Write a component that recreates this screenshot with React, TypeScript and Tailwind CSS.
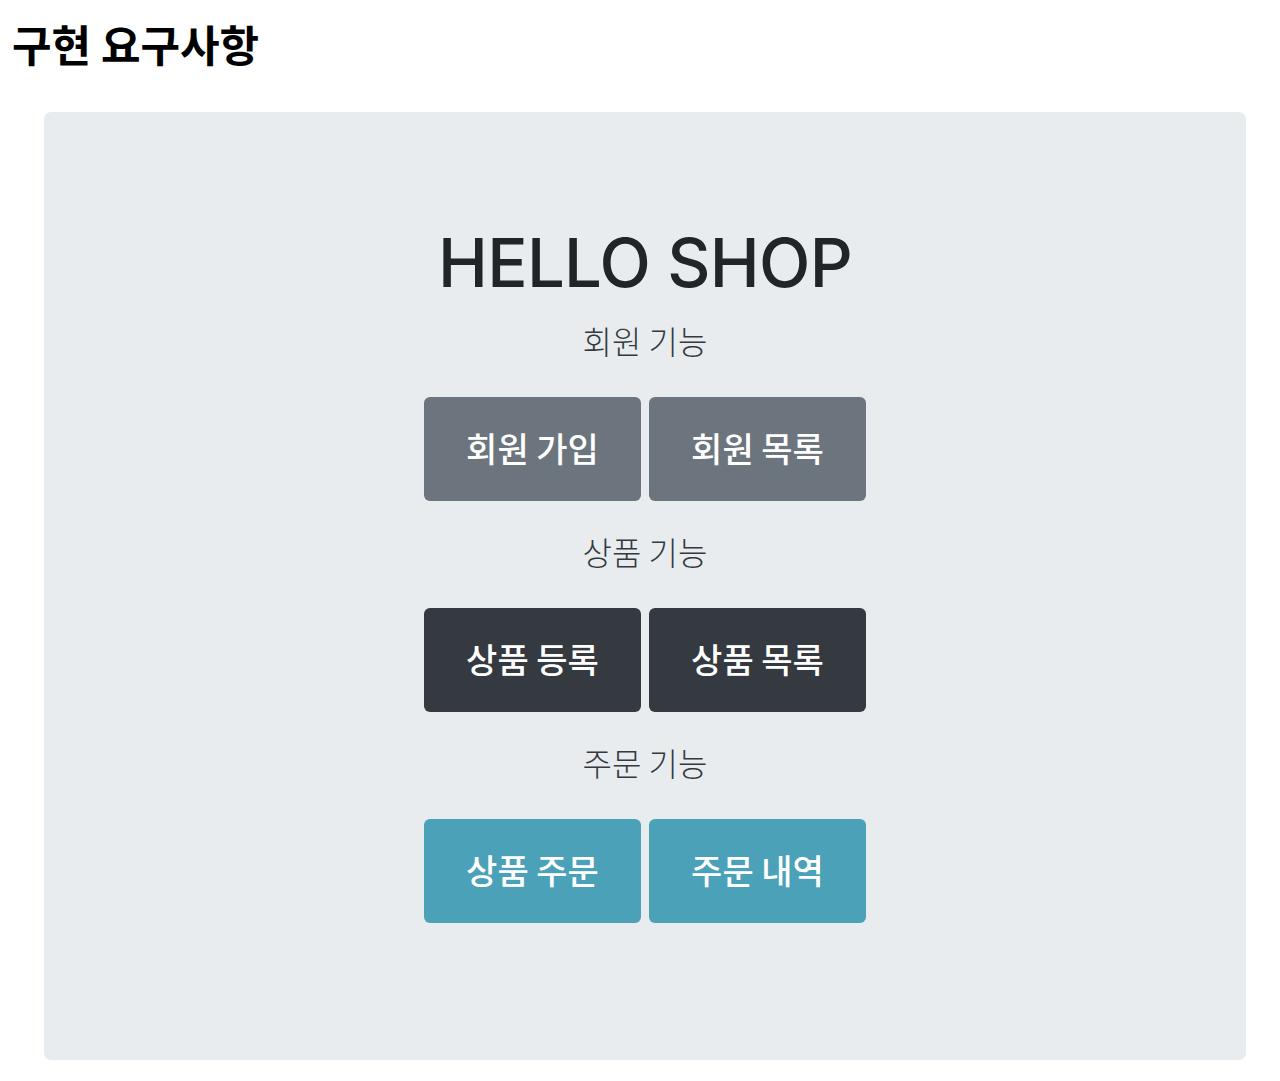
import React from "react";

const kr = { fontFamily: '"Noto Sans CJK KR", "Noto Sans", sans-serif' };

function Btn({ label, cls }: { label: string; cls: string }) {
  return (
    <button
      className={`w-[217px] h-[104px] rounded-[6px] text-white text-[34px] font-medium flex items-center justify-center pb-[3px] ${cls}`}
      style={kr}
    >
      {label}
    </button>
  );
}

function Section({ title, a, b, cls }: { title: string; a: string; b: string; cls: string }) {
  return (
    <div className="flex flex-col items-center">
      <div className="text-[32px] font-light text-[#343a40] leading-[40px]" style={kr}>
        {title}
      </div>
      <div className="flex gap-2 mt-[37px]">
        <Btn label={a} cls={cls} />
        <Btn label={b} cls={cls} />
      </div>
    </div>
  );
}

export default function App() {
  return (
    <div className="bg-white w-[1280px] h-[1081px] overflow-hidden">
      <h1 className="text-[43px] font-bold text-black leading-[48px] pl-[12px] pt-[19px]" style={kr}>
        구현 요구사항
      </h1>
      <div className="ml-[44px] mt-[45px] w-[1202px] h-[948px] bg-[#e9ecef] rounded-[7px] flex flex-col items-center pt-[106px]">
        <div
          className="text-[67px] font-medium text-[#212529] leading-[90px] tracking-[-0.7px]"
          style={{ fontFamily: 'Inter, "Noto Sans", sans-serif' }}
        >
          HELLO SHOP
        </div>
        <div className="flex flex-col gap-[30px] mt-[12px]">
          <Section title="회원 기능" a="회원 가입" b="회원 목록" cls="bg-[#6c757d]" />
          <Section title="상품 기능" a="상품 등록" b="상품 목록" cls="bg-[#343a40]" />
          <Section title="주문 기능" a="상품 주문" b="주문 내역" cls="bg-[#4ba1b7]" />
        </div>
      </div>
    </div>
  );
}
